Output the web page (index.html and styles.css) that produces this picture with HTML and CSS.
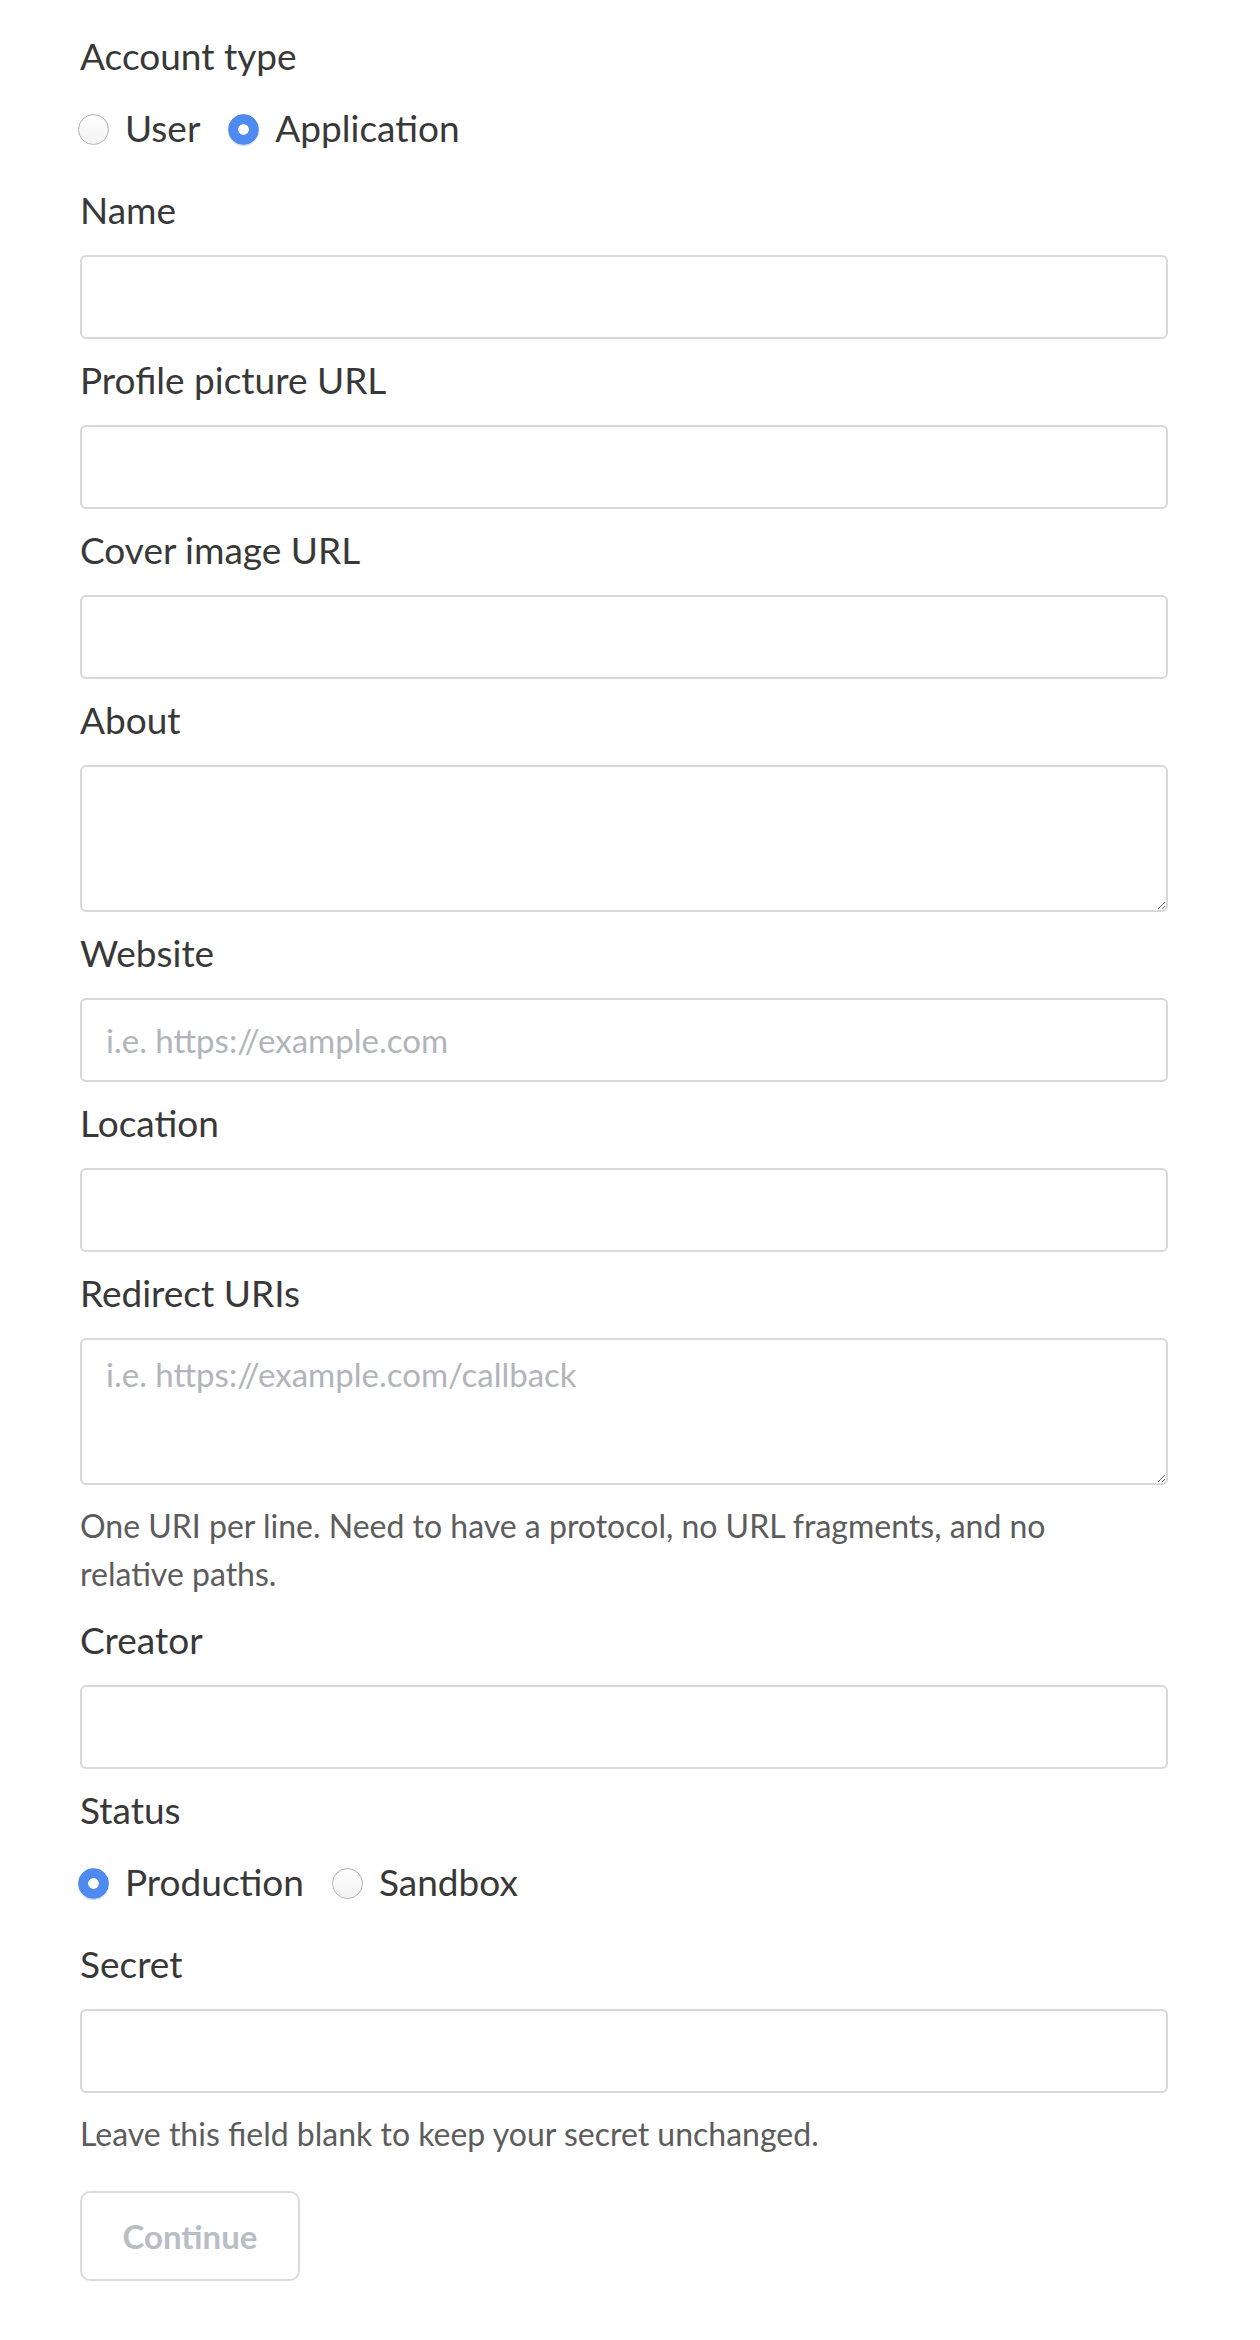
FILE: index.html
```html
<!DOCTYPE html>
<html lang="en">
<head>
<meta charset="utf-8">
<title>Application settings</title>
<link rel="stylesheet" href="styles.css">
</head>
<body>
<form class="form">
  <div class="field">
    <div class="label">Account type</div>
    <div class="radios">
      <label class="radio"><input type="radio" name="type"><span>User</span></label>
      <label class="radio"><input type="radio" name="type" checked><span>Application</span></label>
    </div>
  </div>
  <div class="field">
    <label class="label" for="name">Name</label>
    <input class="input" id="name" type="text">
  </div>
  <div class="field">
    <label class="label" for="avatar">Profile picture URL</label>
    <input class="input" id="avatar" type="text">
  </div>
  <div class="field">
    <label class="label" for="cover">Cover image URL</label>
    <input class="input" id="cover" type="text">
  </div>
  <div class="field">
    <label class="label" for="about">About</label>
    <textarea class="input textarea" id="about"></textarea>
  </div>
  <div class="field">
    <label class="label" for="website">Website</label>
    <input class="input" id="website" type="text" placeholder="i.e. https://example.com">
  </div>
  <div class="field">
    <label class="label" for="location">Location</label>
    <input class="input" id="location" type="text">
  </div>
  <div class="field">
    <label class="label" for="redirect">Redirect URIs</label>
    <textarea class="input textarea" id="redirect" placeholder="i.e. https://example.com/callback"></textarea>
    <p class="help">One URI per line. Need to have a protocol, no URL fragments, and no relative paths.</p>
  </div>
  <div class="field">
    <label class="label" for="creator">Creator</label>
    <input class="input" id="creator" type="text">
  </div>
  <div class="field">
    <div class="label">Status</div>
    <div class="radios">
      <label class="radio"><input type="radio" name="status" checked><span>Production</span></label>
      <label class="radio"><input type="radio" name="status"><span>Sandbox</span></label>
    </div>
  </div>
  <div class="field">
    <label class="label" for="secret">Secret</label>
    <input class="input" id="secret" type="password">
    <p class="help">Leave this field blank to keep your secret unchanged.</p>
  </div>
  <div class="actions">
    <button class="button" type="button" disabled>Continue</button>
  </div>
</form>
</body>
</html>
```
FILE: styles.css
```css
html, body {
  margin: 0;
  padding: 0;
  background: #ffffff;
}

body {
  font-family: Lato, "Liberation Sans", sans-serif;
  color: #383838;
}

.form {
  width: 1088px;
  padding: 31px 0 60px 80px;
  display: flex;
  flex-direction: column;
}

.field {
  display: flex;
  flex-direction: column;
  margin-bottom: 16px;
}

.label {
  display: block;
  font-size: 37px;
  line-height: 50px;
  height: 50px;
  margin-bottom: 20px;
  color: #383838;
}

.radios {
  display: flex;
  align-items: center;
  height: 40px;
  margin-top: 8px;
  margin-bottom: 20px;
}

.radio {
  display: flex;
  align-items: center;
  gap: 16px;
  margin-right: 30px;
  font-size: 37px;
  line-height: 40px;
  color: #383838;
}

.radio span {
  margin-top: -3px;
}

.radio input {
  appearance: none;
  -webkit-appearance: none;
  box-sizing: border-box;
  width: 31px;
  height: 31px;
  margin: 0 0 0 -2px;
  border-radius: 50%;
  border: 1px solid #b4b4b4;
  background: linear-gradient(#ffffff, #f2f2f2);
  box-shadow: inset 0 1px 1px rgba(0, 0, 0, 0.06);
}

.radio input:checked {
  border-color: #4f8af0;
  background: radial-gradient(circle, #ffffff 0 5px, #4f8af0 5.6px);
  box-shadow: 0 1px 1px rgba(30, 80, 180, 0.25);
}

.input {
  display: block;
  box-sizing: border-box;
  width: 1088px;
  height: 84px;
  margin: 0;
  padding: 0 24px;
  border: 2px solid #d5d8dc;
  border-radius: 6px;
  background: #ffffff;
  font-family: Lato, "Liberation Sans", sans-serif;
  font-size: 33px;
  color: #383838;
  outline: none;
}

.input::placeholder {
  color: #b1b4ba;
}

.textarea {
  height: 147px;
  padding: 12px 24px;
  line-height: 44px;
}

.help {
  max-width: 1040px;
  margin: 17px 0 1px;
  font-size: 32px;
  line-height: 48px;
  color: #5c5c5c;
}

.actions {
  margin-top: 16px;
}

.button {
  box-sizing: border-box;
  width: 220px;
  height: 90px;
  border: 2px solid #d8dbdf;
  border-radius: 10px;
  background: #ffffff;
  font-family: Lato, "Liberation Sans", sans-serif;
  font-weight: 700;
  font-size: 33px;
  color: #b9bdc4;
}
```
